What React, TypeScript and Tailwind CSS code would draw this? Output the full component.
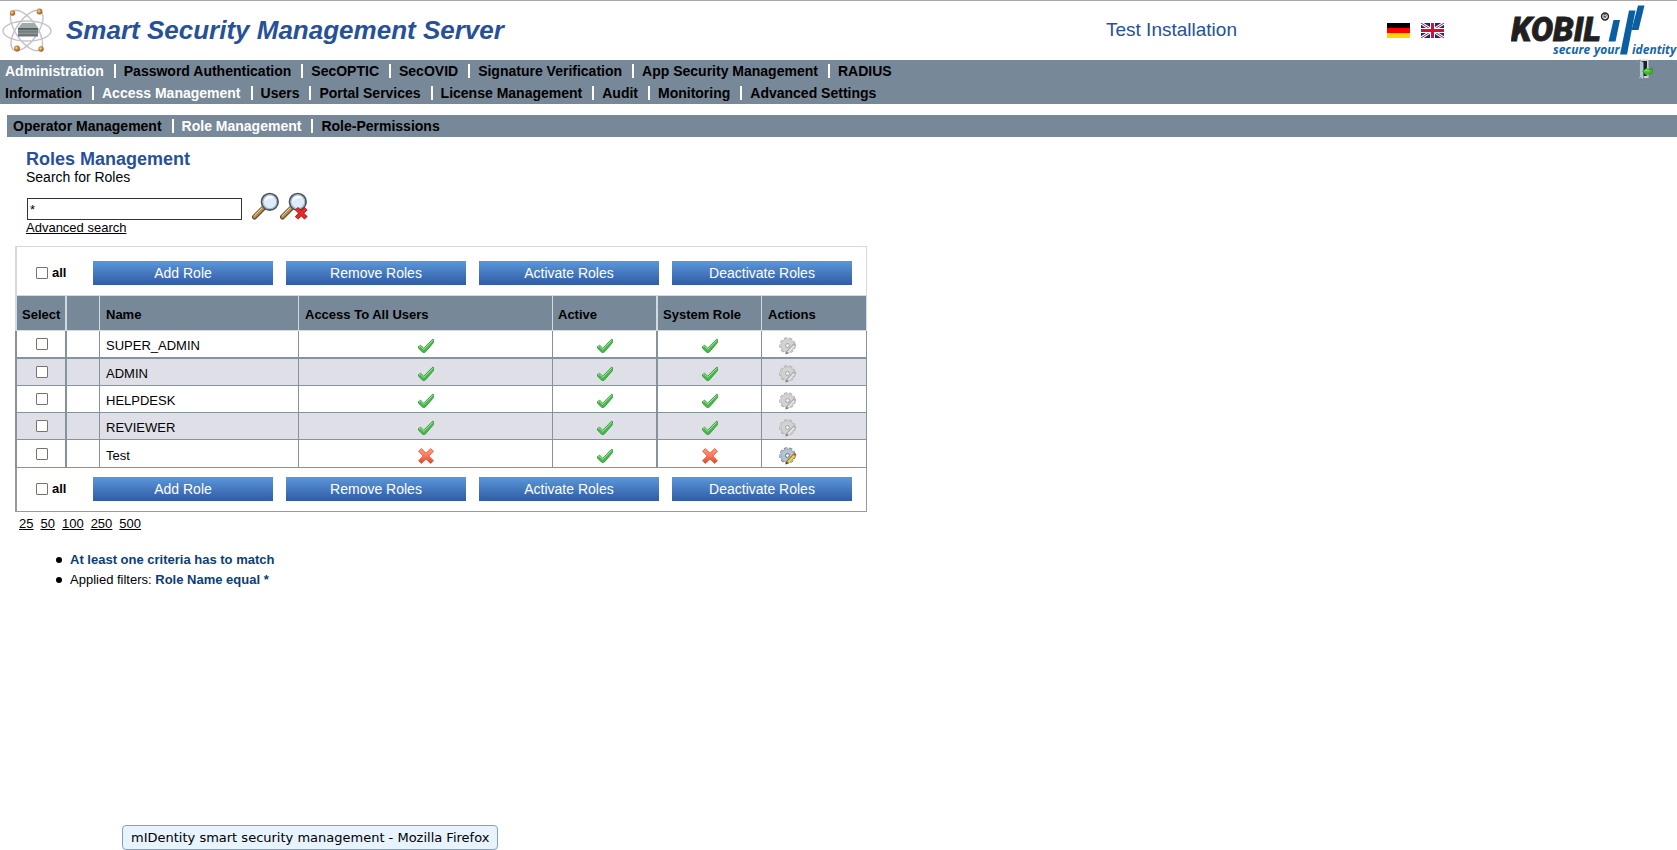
import { useState } from "react";

type Role = {
  name: string;
  accessAll: boolean;
  active: boolean;
  system: boolean;
};

const ROLES: Role[] = [
  { name: "SUPER_ADMIN", accessAll: true, active: true, system: true },
  { name: "ADMIN", accessAll: true, active: true, system: true },
  { name: "HELPDESK", accessAll: true, active: true, system: true },
  { name: "REVIEWER", accessAll: true, active: true, system: true },
  { name: "Test", accessAll: false, active: true, system: false },
];

const MAIN_NAV = [
  "Administration",
  "Password Authentication",
  "SecOPTIC",
  "SecOVID",
  "Signature Verification",
  "App Security Management",
  "RADIUS",
];
const SECOND_NAV = [
  "Information",
  "Access Management",
  "Users",
  "Portal Services",
  "License Management",
  "Audit",
  "Monitoring",
  "Advanced Settings",
];
const THIRD_NAV = ["Operator Management", "Role Management", "Role-Permissions"];
const PAGE_SIZES = ["25", "50", "100", "250", "500"];
const ACTIONS = ["Add Role", "Remove Roles", "Activate Roles", "Deactivate Roles"];

function NavRow({ items, current, label }: { items: string[]; current: string; label: string }) {
  return (
    <nav aria-label={label} className="flex h-[22px] items-center text-sm font-bold whitespace-nowrap">
      {items.map((item, i) => (
        <span key={item} className="flex items-center">
          {i > 0 && <span className="mr-2 ml-2.5 h-3.5 w-0.5 bg-white" />}
          <a href="#" className={item === current ? "text-white" : "text-black"}>
            {item}
          </a>
        </span>
      ))}
    </nav>
  );
}

function AtomLogo() {
  return (
    <svg width="52" height="46" viewBox="0 0 52 46" aria-hidden="true">
      <defs>
        <linearGradient id="server" x1="0" y1="0" x2="0" y2="1">
          <stop offset="0" stopColor="#4d595d" />
          <stop offset="0.5" stopColor="#7b8687" />
          <stop offset="1" stopColor="#6b7173" />
        </linearGradient>
        <radialGradient id="electron" cx="0.4" cy="0.4" r="0.6">
          <stop offset="0" stopColor="#f6d9a8" />
          <stop offset="0.5" stopColor="#d08a3c" />
          <stop offset="1" stopColor="#8d5a2a" />
        </radialGradient>
      </defs>
      <g fill="none" stroke="#c3c3cb" strokeWidth="1.4">
        <ellipse cx="27" cy="23" rx="24" ry="10" />
        <ellipse cx="26.500" cy="22.500" rx="23.500" ry="10.500" transform="rotate(55 26.500 22.500)" />
        <ellipse cx="27" cy="22.500" rx="23.500" ry="10.500" transform="rotate(-55 27 22.500)" />
      </g>
      <path d="M22 15h12l4 5H18z" fill="#a3acad" />
      <path d="M18 20h20v8.500H18z" fill="url(#server)" />
      <path d="M18 22.500h20M18 25.500h20" stroke="#9ba4a5" strokeWidth="0.6" />
      <circle cx="12.500" cy="5" r="2.700" fill="url(#electron)" />
      <circle cx="39.500" cy="3.500" r="2.900" fill="url(#electron)" />
      <circle cx="17" cy="40.500" r="2.900" fill="url(#electron)" />
      <circle cx="41" cy="41" r="2.700" fill="url(#electron)" />
    </svg>
  );
}

function KobilLogo() {
  return (
    <svg width="166" height="54" viewBox="0 0 166 54" role="img" aria-label="KOBIL secure your identity">
      <text
        x="0"
        y="37"
        fontFamily="Roboto, 'Open Sans', sans-serif"
        fontSize="33"
        fontWeight="900"
        fontStyle="italic"
        fill="#221f20"
        stroke="#221f20"
        strokeWidth="0.800"
      >
        KOBIL
      </text>
      <circle cx="94" cy="12.500" r="3.400" fill="none" stroke="#221f20" strokeWidth="1.500" />
      <path d="M93 14.500v-4h1.300q1 0 1 1.100t-1 1.100H93M94.300 12.700l1.100 1.800" fill="none" stroke="#221f20" strokeWidth="0.800" />
      <g fill="#0a5ea4">
        <path d="M102.500 16h6.500l-4.500 21.500H97.500z" />
        <path d="M118 6.500h6.500L116 50.500h-7z" />
        <path d="M127 1.500h6.500L127.500 26h-7z" />
      </g>
      <g fontFamily="'Open Sans', 'Noto Sans', sans-serif" fontSize="12" fontWeight="700" fontStyle="italic" fill="#1566a8">
        <text x="42" y="50">secure</text>
        <text x="83" y="50">your</text>
        <text x="121" y="50">identity</text>
      </g>
    </svg>
  );
}

function GermanFlag() {
  return (
    <svg width="23" height="15" viewBox="0 0 23 15" aria-hidden="true">
      <path fill="#000" d="M0 0h23v5H0z" />
      <path fill="#f00" d="M0 5h23v5H0z" />
      <path fill="#ffd500" d="M0 10h23v5H0z" />
    </svg>
  );
}

function BritishFlag() {
  return (
    <svg width="23" height="15" viewBox="0 0 23 15" aria-hidden="true">
      <path fill="#1d2a7c" d="M0 0h23v15H0z" />
      <path d="M0 0l23 15M23 0L0 15" stroke="#fff" strokeWidth="3" />
      <path d="M0 0l23 15M23 0L0 15" stroke="#d21034" strokeWidth="1" />
      <path d="M11.5 0v15M0 7.5h23" stroke="#fff" strokeWidth="5" />
      <path d="M11.5 0v15M0 7.5h23" stroke="#d21034" strokeWidth="3" />
    </svg>
  );
}

function LogoutIcon() {
  return (
    <svg width="17" height="22" viewBox="0 0 17 22" aria-hidden="true">
      <path d="M1 0.500h9.500v18.500H1z" fill="#cfd6db" />
      <path d="M4 2h5v15H4z" fill="#1d2124" />
      <path d="M1.500 1l4 2.500V21.500L1.500 18z" fill="#b3c5d2" stroke="#5f6f7a" strokeWidth="0.700" />
      <path
        d="M4.500 12.500l4.500-3.800v2.100h2.500q1.200 0 1.200-1.500h1.600v3.200q0 2.600-2.800 2.600H9v2z"
        fill="#3fc31f"
        stroke="#1f7f0e"
        strokeWidth="0.600"
      />
      <path d="M6.300 12.200l2-1.500v1h3.200" stroke="#a6f58a" strokeWidth="0.800" fill="none" />
    </svg>
  );
}

function Magnifier({ cancel = false }: { cancel?: boolean }) {
  return (
    <svg width="28" height="28" viewBox="0 0 28 28" aria-hidden="true">
      <path d="M2.500 25L11.500 16" stroke="#5f4a2f" strokeWidth="5" strokeLinecap="round" />
      <path d="M2.500 24.700L11.200 15.900" stroke="#bd9052" strokeWidth="3" strokeLinecap="round" />
      <path d="M2.200 23.800L10.500 15.500" stroke="#ecd6ab" strokeWidth="0.900" />
      <circle cx="17.800" cy="9.800" r="8.200" fill="#dcecfc" stroke="#46545c" strokeWidth="1.900" />
      <circle cx="17.800" cy="9.800" r="7" fill="none" stroke="#a3b4be" strokeWidth="1.100" />
      <path d="M12.500 9a6 6 0 0 1 10-3.200q-5.500 0-10 3.200z" fill="#fff" />
      {cancel && (
        <>
          <path d="M16.500 16.500l9.500 9.500M26 16.500l-9.500 9.500" stroke="#b51111" strokeWidth="4.400" />
          <path d="M16.500 16.500l9.500 9.500M26 16.500l-9.500 9.500" stroke="#e42b2b" strokeWidth="3" />
        </>
      )}
    </svg>
  );
}

function CheckIcon() {
  return (
    <svg className="inline-block" width="16" height="16" viewBox="0 0 16 16" role="img" aria-label="Yes">
      <path
        d="M0.500 8.500l2.200-1.200 3 2.900L14.500 1.300q1.200-0.300 1.100 0.900v2.300L7.400 14q-1.500 1.300-3 0L0.500 10.200z"
        fill="#49b84c"
        stroke="#2f9136"
        strokeWidth="0.800"
      />
      <path d="M1.200 8.900l1.400-0.600 3.200 3L14.800 2.300" fill="none" stroke="#a3e6a0" strokeWidth="1" />
    </svg>
  );
}

function CrossIcon() {
  return (
    <svg className="inline-block" width="16" height="16" viewBox="0 0 16 16" role="img" aria-label="No">
      <defs>
        <linearGradient id="cross" x1="0" y1="0" x2="0" y2="1">
          <stop offset="0" stopColor="#ff9c83" />
          <stop offset="0.550" stopColor="#fb7257" />
          <stop offset="1" stopColor="#ea3d1c" />
        </linearGradient>
      </defs>
      <path
        d="M3.300 0.600L8 5.200l4.700-4.600 2.700 2.600L10.800 8l4.600 4.700-2.700 2.700L8 10.900l-4.700 4.500-2.700-2.700L5.200 8 0.600 3.200z"
        fill="url(#cross)"
        stroke="#e2583c"
        strokeWidth="0.900"
        strokeLinejoin="round"
      />
    </svg>
  );
}

function GearIcon({ enabled }: { enabled: boolean }) {
  const body = enabled ? "#b4c3cd" : "#d2d2d2";
  const edge = enabled ? "#6a7c88" : "#a6a6a6";
  return (
    <svg width="18" height="18" viewBox="0 0 18 18" aria-hidden="true">
      <circle cx="8.500" cy="8.500" r="7.200" fill="none" stroke={edge} strokeWidth="2" strokeDasharray="3.300 1.730" />
      <circle cx="8.500" cy="8.500" r="6.700" fill={body} stroke={edge} strokeWidth="0.500" />
      <circle cx="8.500" cy="8.500" r="7" fill="none" stroke={body} strokeWidth="1.200" strokeDasharray="2.600 2.290" strokeDashoffset="-0.300" />
      <circle cx="8.500" cy="8.500" r="2" fill={enabled ? "#e9eef1" : "#ededed"} stroke={edge} strokeWidth="1" />
      <path d="M6.500 17.500l1-3.500 7-7.500 2.500 2.300-7 7.300z" fill={enabled ? "#8f7a2b" : "#a5a5a5"} />
      <path d="M8.500 14.500l6-6.500 1.500 1.300-6 6.500z" fill={enabled ? "#ffd83d" : "#e8e8e8"} />
      <path d="M14.500 6.500l1.300-0.500 1.500 1.400-0.300 1.400z" fill={enabled ? "#d8342a" : "#bdbdbd"} />
      <path d="M6.500 17.500l0.800-2.500 1.500 1.600z" fill={enabled ? "#333" : "#777"} />
    </svg>
  );
}

const CHECKBOX =
  "block size-3 shrink-0 appearance-none rounded-[1px] border border-[#77736d] bg-white checked:bg-[#3465a8]";

function Toolbar({
  allSelected,
  onToggleAll,
  className,
}: {
  allSelected: boolean;
  onToggleAll: () => void;
  className: string;
}) {
  return (
    <div className={`flex items-center border-r border-l-2 ${className}`}>
      <label className="flex w-[76px] shrink-0 items-center gap-1 pl-[19px] text-[13px] leading-4 font-bold">
        <input type="checkbox" className={CHECKBOX} checked={allSelected} onChange={onToggleAll} />
        all
      </label>
      <div className="flex gap-[13px]">
        {ACTIONS.map((action) => (
          <button
            key={action}
            type="button"
            className="h-6 w-[180px] bg-linear-to-b from-[#5c97da] to-[#305ca4] text-sm leading-6 text-white"
          >
            {action}
          </button>
        ))}
      </div>
    </div>
  );
}

export default function App() {
  const [query, setQuery] = useState("*");
  const [selected, setSelected] = useState<string[]>([]);
  const allSelected = selected.length === ROLES.length;

  const toggleAll = () => setSelected(allSelected ? [] : ROLES.map((r) => r.name));
  const toggle = (name: string) =>
    setSelected(selected.includes(name) ? selected.filter((n) => n !== name) : [...selected, name]);

  const th = "border-t border-b border-[#d3dadd] pt-1 text-left font-bold";
  const td = "border-r border-[#86939c]";
  const bullet =
    "flex items-center gap-2 before:size-1.5 before:rounded-full before:bg-black before:content-['']";

  return (
    <div className="min-h-screen bg-white font-['Liberation_Sans',Arial,sans-serif] text-black">
      <header className="flex h-[60px] items-center border-t border-[#aaa9a8] text-[#27509b]">
        <div className="flex flex-1 items-center">
          <AtomLogo />
          <h1 className="ml-3.5 pb-0.5 text-[26px] leading-8 font-bold italic whitespace-nowrap">
            Smart Security Management Server
          </h1>
        </div>
        <p className="w-[281px] pb-0.5 text-[19px] leading-6 whitespace-nowrap">Test Installation</p>
        <div className="flex w-[124px] gap-[11px]">
          <button type="button" aria-label="Deutsch">
            <GermanFlag />
          </button>
          <button type="button" aria-label="English">
            <BritishFlag />
          </button>
        </div>
        <KobilLogo />
      </header>

      <div className="flex items-start justify-between bg-[#778899] pr-[22px] pl-[5px]">
        <div>
          <NavRow items={MAIN_NAV} current="Administration" label="Main" />
          <NavRow items={SECOND_NAV} current="Access Management" label="Administration" />
        </div>
        <button type="button" aria-label="Log out" className="-mt-px">
          <LogoutIcon />
        </button>
      </div>

      <div className="mt-[11px] ml-[7px] bg-[#778899] pl-1.5">
        <NavRow items={THIRD_NAV} current="Role Management" label="Access Management" />
      </div>

      <main>
        <section className="pt-3 pl-[26px]">
          <h2 className="text-[18px] leading-5 font-bold text-[#27509b]">Roles Management</h2>
          <label htmlFor="role-search" className="block text-sm leading-4">
            Search for Roles
          </label>
          <div className="mt-[7px] flex items-end">
            <input
              id="role-search"
              type="text"
              value={query}
              onChange={(e) => setQuery(e.target.value)}
              className="ml-px h-[22px] w-[215px] border border-[#333] bg-white px-0.5 text-[13px] outline-none"
            />
            <button type="button" aria-label="Search" className="ml-2.5">
              <Magnifier />
            </button>
            <button type="button" aria-label="Clear search">
              <Magnifier cancel />
            </button>
          </div>
          <a href="#" className="block w-fit text-[13px] leading-4 underline">
            Advanced search
          </a>
        </section>

        <section className="mt-2.5 ml-[15px] w-[852px]">
          <Toolbar
            allSelected={allSelected}
            onToggleAll={toggleAll}
            className="border-t border-[#d3dadd] pt-3.5 pb-2.5"
          />
          <table className="w-full table-fixed border-separate border-spacing-0 text-[13px] leading-4">
            <colgroup>
              <col className="w-[52px]" />
              <col className="w-[33px]" />
              <col className="w-[199px]" />
              <col className="w-[254px]" />
              <col className="w-[105px]" />
              <col className="w-[104px]" />
              <col />
            </colgroup>
            <thead>
              <tr className="h-9 bg-[#778899]">
                <th className={`${th} border-r-2 border-l-2 pl-[5px]`}>Select</th>
                <th className={`${th} border-r`}></th>
                <th className={`${th} border-r pl-1.5`}>Name</th>
                <th className={`${th} border-r pl-1.5`}>Access To All Users</th>
                <th className={`${th} border-r-2 pl-[5px]`}>Active</th>
                <th className={`${th} border-r pl-[5px]`}>System Role</th>
                <th className={`${th} border-r pl-1.5`}>Actions</th>
              </tr>
            </thead>
            <tbody>
              {ROLES.map((role, i) => {
                const line = i === 0 ? "border-b-2" : "border-b";
                return (
                  <tr
                    key={role.name}
                    className={`${i === 0 || i === 4 ? "h-7" : "h-[27px]"} ${i % 2 ? "bg-[#dfdfe7]" : "bg-white"}`}
                  >
                    <td className={`${line} border-r-2 border-l-2 border-[#86939c]`}>
                      <input
                        type="checkbox"
                        aria-label={`Select ${role.name}`}
                        className={`${CHECKBOX} ml-[19px]`}
                        checked={selected.includes(role.name)}
                        onChange={() => toggle(role.name)}
                      />
                    </td>
                    <td className={`${td} ${line}`}></td>
                    <td className={`${td} ${line} pt-1 pl-1.5`}>{role.name}</td>
                    <td className={`${td} ${line} pt-1 text-center leading-none`}>
                      {role.accessAll ? <CheckIcon /> : <CrossIcon />}
                    </td>
                    <td className={`${line} border-r-2 border-[#86939c] pt-1 text-center leading-none`}>
                      {role.active ? <CheckIcon /> : <CrossIcon />}
                    </td>
                    <td className={`${td} ${line} pt-1 text-center leading-none`}>
                      {role.system ? <CheckIcon /> : <CrossIcon />}
                    </td>
                    <td className={`${td} ${line} pt-1 pl-[17px] leading-none`}>
                      <button type="button" aria-label={`Edit ${role.name}`} className="block">
                        <GearIcon enabled={!role.system} />
                      </button>
                    </td>
                  </tr>
                );
              })}
            </tbody>
          </table>
          <Toolbar
            allSelected={allSelected}
            onToggleAll={toggleAll}
            className="border-b border-[#999999] pt-[9px] pb-2.5"
          />
        </section>

        <nav aria-label="Rows per page" className="mt-1 ml-[19px] flex gap-[7px] text-[13px] leading-4">
          {PAGE_SIZES.map((size) => (
            <a key={size} href="#" className="underline">
              {size}
            </a>
          ))}
        </nav>

        <ul className="mt-[18px] ml-14 text-[13px] leading-5">
          <li className={bullet}>
            <b className="text-[#0b3e74]">At least one criteria has to match</b>
          </li>
          <li className={bullet}>
            <span>
              Applied filters: <b className="text-[#0b3e74]">Role Name equal *</b>
            </span>
          </li>
        </ul>
      </main>

      <div
        role="tooltip"
        className="fixed bottom-0 left-[122px] rounded-[4px] border border-[#79a2d8] bg-[#e7f3fd] px-2 font-['DejaVu_Sans',sans-serif] text-[13px] leading-[23px] whitespace-nowrap"
      >
        mIDentity smart security management - Mozilla Firefox
      </div>
    </div>
  );
}
